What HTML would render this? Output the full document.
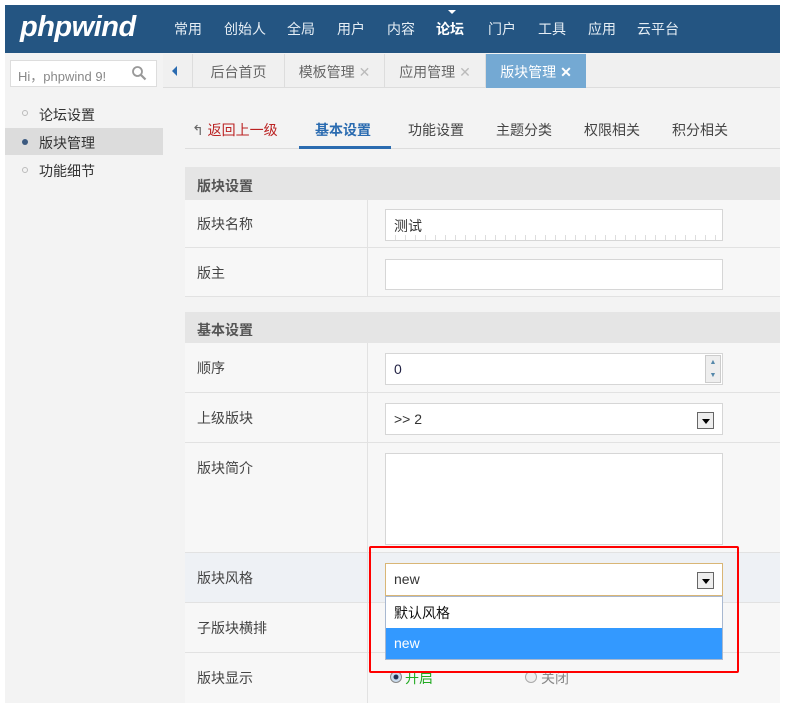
<!DOCTYPE html>
<html><head><meta charset="utf-8"><style>
*{margin:0;padding:0;box-sizing:border-box}
body{width:786px;height:709px;background:#fff;font-family:"Liberation Sans","Noto Sans CJK SC",sans-serif;font-size:13px;color:#333;position:relative;overflow:hidden}
.a{position:absolute}
#hd{left:5px;top:5px;width:775px;height:48px;background:#245582}
#logo{left:20px;top:11px;color:#fff;font:italic bold 29px "Liberation Sans",sans-serif;letter-spacing:-0.5px}
.nv{top:19px;color:#e6eef5;font-size:14px}
#main{left:5px;top:53px;width:775px;height:650px;background:#f3f3f3}
#search{left:10px;top:60px;width:147px;height:27px;background:#fff;border:1px solid #ddd;color:#888;font-size:13px;padding:5px 0 0 7px}
#tabs{left:163px;top:54px;width:617px;height:34px;background:#f0f0f0;border-bottom:1px solid #ddd}
.tb{top:54px;height:34px;color:#666;font-size:14px;padding-top:8px;border-right:1px solid #ddd;text-align:center}
.side{left:22px;font-size:14px;color:#333}
.st{top:120px;font-size:14px;color:#444}
.lbl{left:197px;font-size:14px;color:#444}
.row{left:185px;width:595px;border-bottom:1px solid #e2e2e2;background:#f7f7f7}
.sh{left:185px;width:595px;background:#e5e5e5;font-weight:bold;color:#555;font-size:14px;padding:9px 0 0 12px}
.inp{left:385px;width:338px;background:#fff;border:1px solid #d6d6d6;font-size:14px;padding:0 0 0 8px}
.arr{width:17px;height:17px;border:1px solid #666;background:#eee;right:8px;top:8px}
.arr:after{content:"";position:absolute;left:4px;top:6px;border:4px solid transparent;border-top:5px solid #000}
</style></head><body>
<div id="hd" class="a"></div>
<div id="logo" class="a">phpwind</div>
<div class="a nv" style="left:174px">常用</div>
<div class="a nv" style="left:224px">创始人</div>
<div class="a nv" style="left:287px">全局</div>
<div class="a nv" style="left:337px">用户</div>
<div class="a nv" style="left:387px">内容</div>
<div class="a nv" style="left:436px;font-weight:bold;color:#fff">论坛</div>
<div class="a" style="left:448px;top:10px;border:4px solid transparent;border-top:4px solid #fff"></div>
<div class="a nv" style="left:488px">门户</div>
<div class="a nv" style="left:538px">工具</div>
<div class="a nv" style="left:588px">应用</div>
<div class="a nv" style="left:637px">云平台</div>
<div id="main" class="a"></div>
<div id="search" class="a">Hi，phpwind 9!</div>
<svg class="a" style="left:131px;top:65px" width="16" height="16" viewBox="0 0 16 16"><circle cx="6.5" cy="6.5" r="4.5" fill="none" stroke="#999" stroke-width="1.8"/><path d="M10 10l4.5 4.5" stroke="#999" stroke-width="2.2"/></svg>
<div id="tabs" class="a"></div>
<div class="a" style="left:172px;top:66px;border:5px solid transparent;border-right:5px solid #2a6bb0;border-left:0"></div>
<div class="a tb" style="left:163px;width:30px"></div>
<div class="a tb" style="left:193px;width:92px">后台首页</div>
<div class="a tb" style="left:285px;width:100px">模板管理 <span style="color:#bbb">✕</span></div>
<div class="a tb" style="left:385px;width:101px">应用管理 <span style="color:#bbb">✕</span></div>
<div class="a tb" style="left:486px;width:100px;background:#74a9d3;color:#fff;border:0">版块管理 <b>✕</b></div>
<div class="a" style="left:5px;top:128px;width:158px;height:27px;background:#dcdcdc"></div>
<div class="a" style="left:22px;top:110px;width:6px;height:6px;border:1px solid #bbb;border-radius:50%"></div>
<div class="a" style="left:22px;top:139px;width:6px;height:6px;background:#3c5a80;border-radius:50%"></div>
<div class="a" style="left:22px;top:167px;width:6px;height:6px;border:1px solid #bbb;border-radius:50%"></div>
<div class="a side" style="left:39px;top:105px">论坛设置</div>
<div class="a side" style="left:39px;top:133px">版块管理</div>
<div class="a side" style="left:39px;top:161px">功能细节</div>
<div class="a" style="left:185px;top:148px;width:595px;height:1px;background:#ddd"></div>
<div class="a st" style="left:192px;color:#b22"><span style="color:#666">↰</span> 返回上一级</div>
<div class="a st" style="left:315px;color:#2a6bb0;font-weight:bold">基本设置</div>
<div class="a" style="left:299px;top:146px;width:92px;height:3px;background:#2a6bb0"></div>
<div class="a st" style="left:408px">功能设置</div>
<div class="a st" style="left:496px">主题分类</div>
<div class="a st" style="left:584px">权限相关</div>
<div class="a st" style="left:672px">积分相关</div>
<div class="a sh" style="top:167px;height:33px">版块设置</div>
<div class="a row" style="top:200px;height:48px"></div>
<div class="a row" style="top:248px;height:49px"></div>
<div class="a sh" style="top:312px;height:31px;padding-top:8px">基本设置</div>
<div class="a row" style="top:343px;height:50px"></div>
<div class="a row" style="top:393px;height:50px"></div>
<div class="a row" style="top:443px;height:110px"></div>
<div class="a row" style="top:553px;height:50px;background:#eef1f5"></div>
<div class="a row" style="top:603px;height:50px"></div>
<div class="a row" style="top:653px;height:50px;border:0"></div>
<div class="a" style="left:367px;top:200px;width:1px;height:97px;background:#e2e2e2"></div>
<div class="a" style="left:367px;top:343px;width:1px;height:360px;background:#e2e2e2"></div>
<div class="a lbl" style="top:214px">版块名称</div>
<div class="a lbl" style="top:263px">版主</div>
<div class="a lbl" style="top:358px">顺序</div>
<div class="a lbl" style="top:408px">上级版块</div>
<div class="a lbl" style="top:458px">版块简介</div>
<div class="a lbl" style="top:568px">版块风格</div>
<div class="a lbl" style="top:618px">子版块横排</div>
<div class="a lbl" style="top:668px">版块显示</div>
<div class="a inp" style="top:209px;height:32px;padding-top:6px;background:repeating-linear-gradient(90deg,#fff 0 9px,#ddd 9px 10px) bottom/100% 5px no-repeat,#fff">测试</div>
<div class="a inp" style="top:259px;height:31px"></div>
<div class="a inp" style="top:353px;height:32px;padding-top:7px;color:#224">0<div class="a" style="right:1px;top:1px;width:16px;height:28px;background:#eee;border:1px solid #ccc;font-size:7px;color:#58a;text-align:center;line-height:13px">▲<br>▼</div></div>
<div class="a inp" style="top:403px;height:32px;padding-top:7px">&gt;&gt; 2<div class="a arr"></div></div>
<div class="a inp" style="top:453px;height:92px"></div>
<div class="a" style="left:390px;top:671px;width:12px;height:12px;border-radius:50%;border:1px solid #888;background:radial-gradient(#235 30%,#cde 40%)"></div>
<div class="a" style="left:405px;top:668px;color:#2a2;font-size:14px">开启</div>
<div class="a" style="left:525px;top:671px;width:12px;height:12px;border-radius:50%;border:1px solid #aaa;background:#eee"></div>
<div class="a" style="left:541px;top:668px;color:#888;font-size:14px">关闭</div>
<div class="a inp" style="top:563px;height:33px;border-color:#d9b676;padding-top:7px">new<div class="a arr"></div></div>
<div class="a" style="left:385px;top:596px;width:338px;height:64px;background:#fff;border:1px solid #a8b8d0"></div>
<div class="a" style="left:394px;top:603px;font-size:14px;color:#111">默认风格</div>
<div class="a" style="left:386px;top:628px;width:336px;height:31px;background:#3399ff;color:#fff;font-size:14px;padding:7px 0 0 8px">new</div>
<div class="a" style="left:369px;top:546px;width:370px;height:127px;border:2px solid #f00;border-radius:2px"></div>
</body></html>
